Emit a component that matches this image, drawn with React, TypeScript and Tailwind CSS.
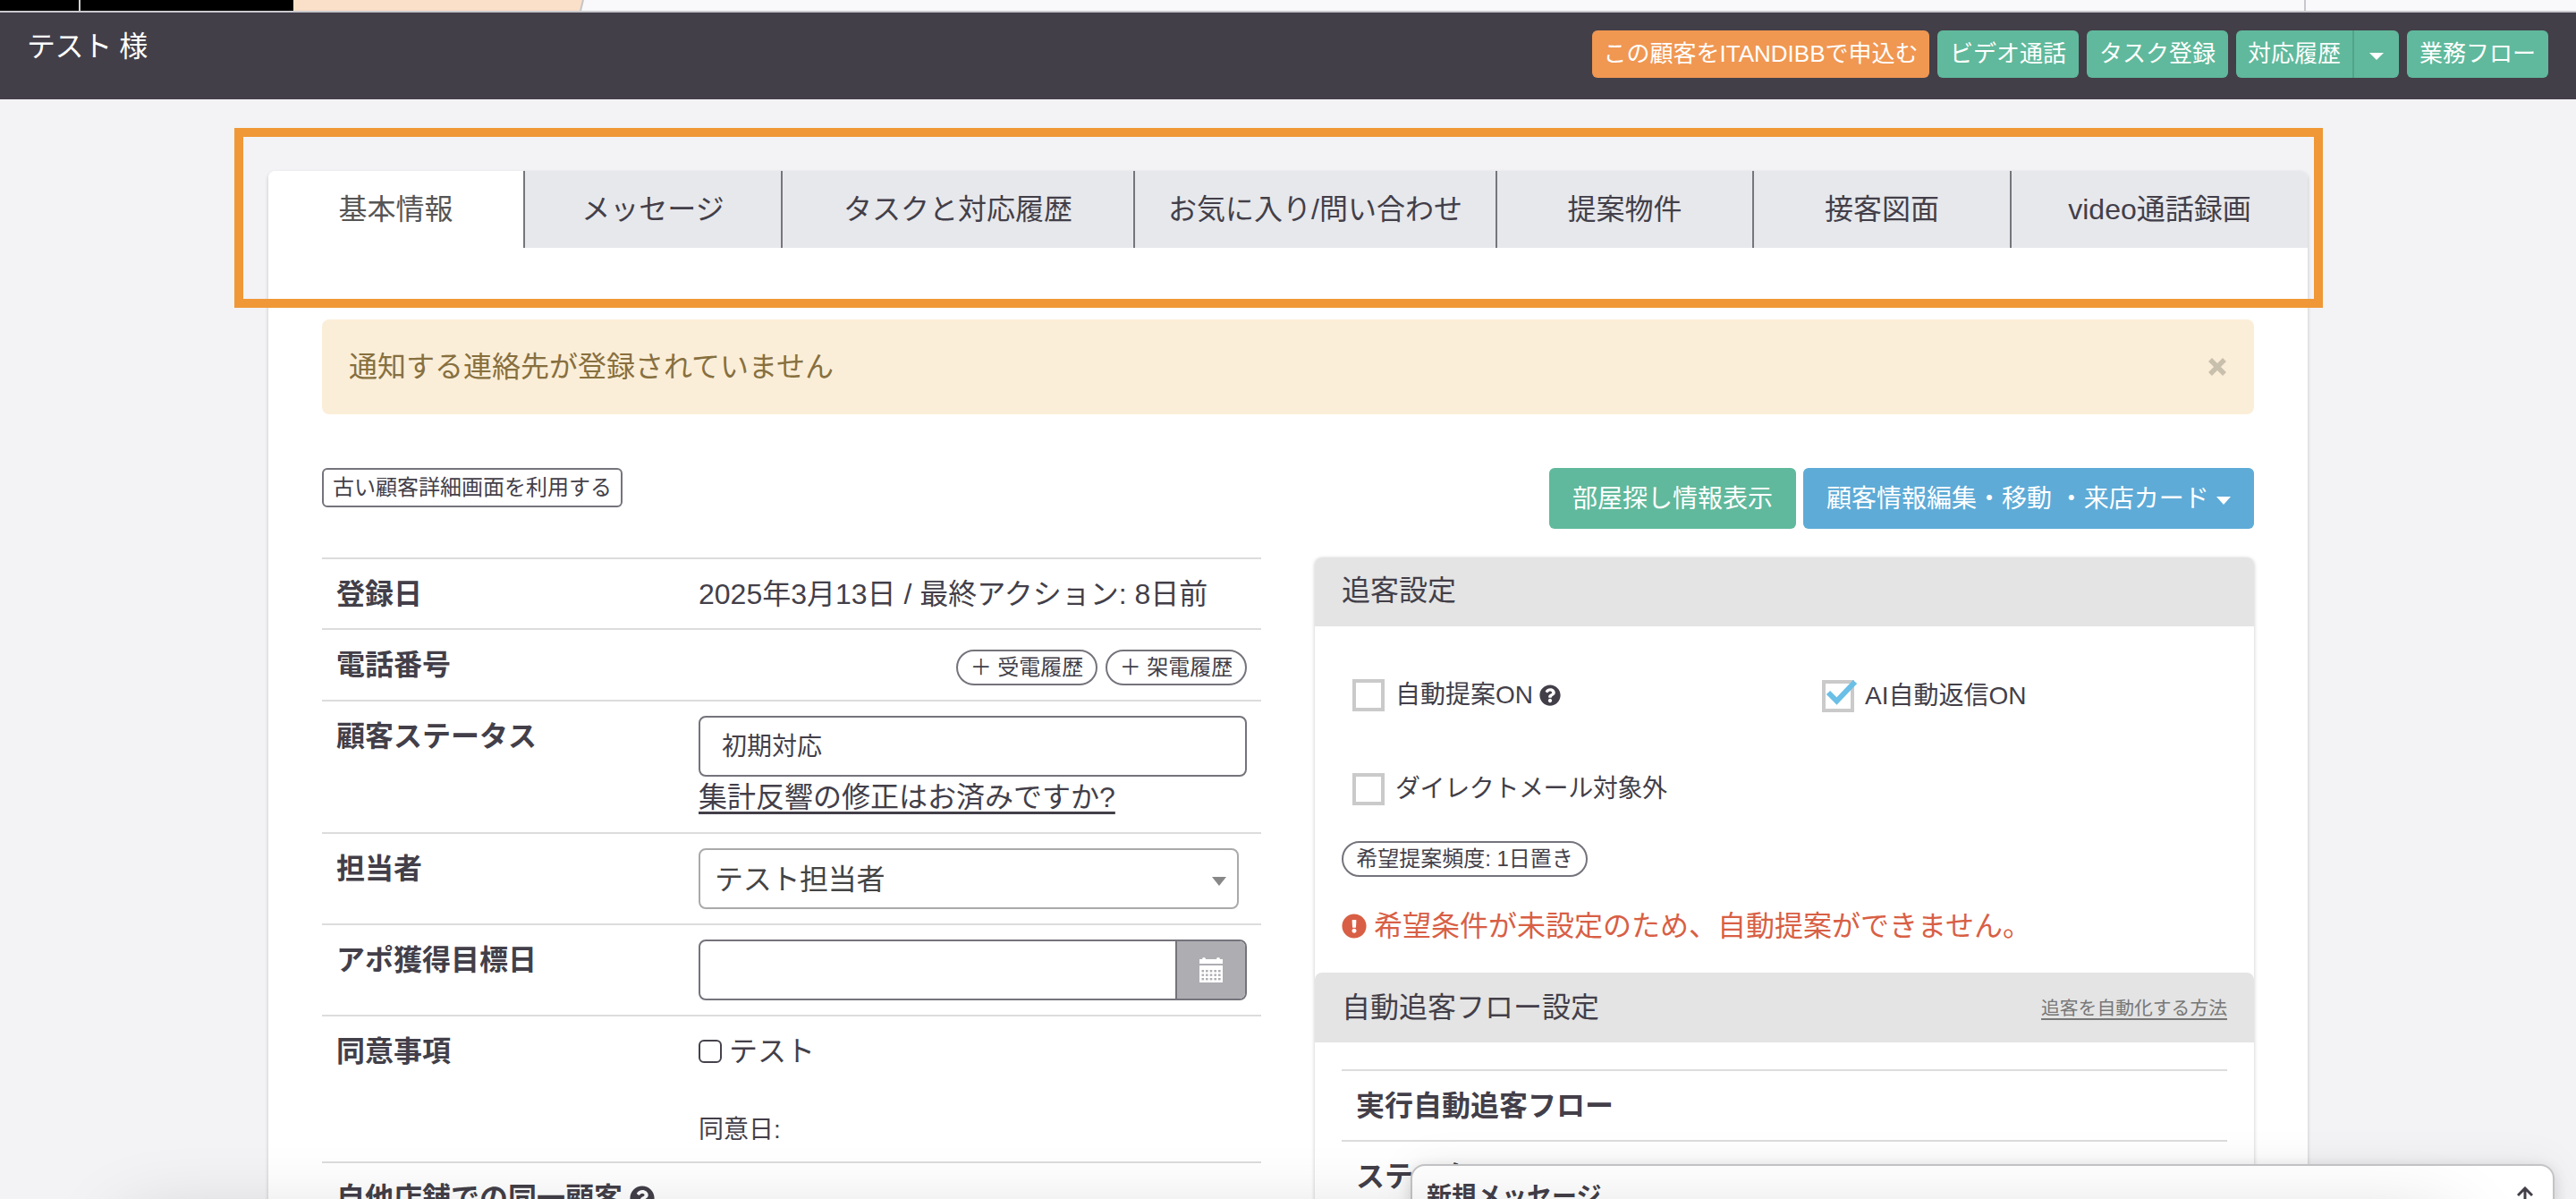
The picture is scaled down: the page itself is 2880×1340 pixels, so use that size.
import type { ReactNode } from 'react'
import { FaExclamationCircle, FaQuestionCircle } from 'react-icons/fa'

const tabs = [
  { label: '基本情報', width: 'w-[285px]' },
  { label: 'メッセージ', width: 'w-[288px]' },
  { label: 'タスクと対応履歴', width: 'w-[394px]' },
  { label: 'お気に入り/問い合わせ', width: 'w-[405px]' },
  { label: '提案物件', width: 'w-[287px]' },
  { label: '接客図面', width: 'w-[288px]' },
  { label: 'video通話録画', width: 'w-[333px]' },
]

function Caret({ className = 'w-4 h-2' }: { className?: string }) {
  return (
    <svg viewBox="0 0 16 8" preserveAspectRatio="none" className={`fill-current ${className}`}>
      <path d="M0 0h16L8 8z" />
    </svg>
  )
}

// Calendar glyph with a 5x3 grid of day dots
function CalendarIcon() {
  return (
    <svg viewBox="0 0 26 28" className="h-7 w-[26px]">
      <path d="M0 2h3q0-2 2-2t2 2h12q0-2 2-2t2 2h3v5H0zM0 9h26v19H0z" fill="#fff" />
      {[14, 18.5, 23].map((y) =>
        [2.5, 7, 11.7, 16.4, 21].map((x) => (
          <rect key={`${x}-${y}`} x={x} y={y} width="2.6" height="2.4" fill="#aeadb2" />
        )),
      )}
    </svg>
  )
}

// Small button used in the dark header
function HeaderButton({
  children,
  className = 'w-[158px] rounded-md bg-[#60b99c]',
}: {
  children: ReactNode
  className?: string
}) {
  return (
    <button
      className={`h-[53px] text-center text-[26px] leading-[53px] text-white whitespace-nowrap ${className}`}
    >
      {children}
    </button>
  )
}

// Outlined pill
function Pill({ children, className = '' }: { children: ReactNode; className?: string }) {
  return (
    <button
      className={`h-10 rounded-full border-2 border-[#75737b] text-2xl leading-9 whitespace-nowrap ${className}`}
    >
      {children}
    </button>
  )
}

// One row of the customer detail table
function Row({
  label,
  children,
  className = '',
}: {
  label: ReactNode
  children?: ReactNode
  className?: string
}) {
  return (
    <div className={`flex border-t-2 border-[#dcdcdc] px-4 pt-4 ${className}`}>
      <div className="w-[405px] shrink-0 font-bold leading-[46px]">{label}</div>
      <div className="flex-1">{children}</div>
    </div>
  )
}

function CheckItem({
  label,
  checked = false,
  children,
  className = '',
}: {
  label: string
  checked?: boolean
  children?: ReactNode
  className?: string
}) {
  return (
    <div className={`flex items-center text-[28px] leading-9 ${className}`}>
      <span className="relative mr-3 size-9 shrink-0 border-4 border-[#cacaca] bg-white">
        {checked && (
          <svg viewBox="0 0 36 36" className="absolute -top-1 -left-1 size-9 overflow-visible">
            <path d="M7 14l9.5 9.5L37 2" fill="none" stroke="#6bbfe6" strokeWidth="6" />
          </svg>
        )}
      </span>
      {label}
      {children}
    </div>
  )
}

function Header() {
  return (
    <header>
      <div className="flex h-3 bg-[#f9f9fc]">
        <svg viewBox="0 0 654 12" className="h-3 w-[654px]">
          <path d="M0 0h328v12H0z" fill="#000" />
          <path d="M88 0h2v12h-2z" fill="#d0d0d0" />
          <path d="M328 0h324l-4 12H328z" fill="#fadfc9" />
          <path d="M652 0l-3 12" stroke="#c5c5c5" strokeWidth="2" />
        </svg>
        <div className="ml-auto w-[304px] border-l-2 border-[#c8c8cc]" />
      </div>
      <div className="flex h-[99px] justify-between border-t-2 border-[#c9c8cc] bg-[#433f49] pt-5 pr-[31px] pl-[30px]">
        <div className="-mt-[3px] leading-[42px] tracking-[-0.4px] text-white">テスト 様</div>
        <div className="flex gap-[9px]">
          <HeaderButton className="w-[377px] rounded-md bg-[#f09752]">
            この顧客をITANDIBBで申込む
          </HeaderButton>
          <HeaderButton>ビデオ通話</HeaderButton>
          <HeaderButton>タスク登録</HeaderButton>
          <div className="flex">
            <HeaderButton className="w-[132px] rounded-l-md border-r-2 border-[#52a389] bg-[#60b99c]">
              対応履歴
            </HeaderButton>
            <button className="flex h-[53px] w-[50px] items-center justify-center rounded-r-md bg-[#60b99c] pt-1 text-white">
              <Caret />
            </button>
          </div>
          <HeaderButton>業務フロー</HeaderButton>
        </div>
      </div>
    </header>
  )
}

function CustomerTable() {
  return (
    <div className="w-[1050px]">
      <Row label="登録日" className="h-[79px] leading-[46px]">
        2025年3月13日 / 最終アクション: 8日前
      </Row>
      <Row label="電話番号" className="h-20">
        <div className="mt-1.5 flex justify-end gap-[9px]">
          <Pill className="w-[158px]">＋ 受電履歴</Pill>
          <Pill className="w-[158px]">＋ 架電履歴</Pill>
        </div>
      </Row>
      <Row label="顧客ステータス" className="h-[148px]">
        <div className="h-[68px] w-[613px] rounded-lg border-2 border-[#75737b] pl-6 text-[28px] leading-[65px]">
          初期対応
        </div>
        <div className="leading-[46px] underline decoration-[2.5px] underline-offset-[5px]">
          集計反響の修正はお済みですか?
        </div>
      </Row>
      <Row label="担当者" className="h-[102px]">
        <div className="flex h-[68px] w-[604px] items-center justify-between rounded-lg border-2 border-[#aaa] pt-0.5 pr-3 pl-4 text-[#444]">
          <span className="tracking-[-0.3px]">テスト担当者</span>
          <Caret className="mt-1 h-2.5 w-4 text-[#888]" />
        </div>
      </Row>
      <Row label="アポ獲得目標日" className="h-[102px]">
        <div className="flex h-[68px] w-[613px] rounded-lg border-2 border-[#75737b]">
          <div className="flex-1" />
          <div className="flex w-[78px] items-center justify-center rounded-r-md border-l-2 border-[#75737b] bg-[#aeadb2]">
            <CalendarIcon />
          </div>
        </div>
      </Row>
      <Row label="同意事項" className="h-[164px]">
        <div className="flex h-[46px] items-center">
          <span className="mr-2 size-[26px] rounded-md border-[2.5px] border-[#45424b]" />
          テスト
        </div>
        <div className="mt-[45px] text-[28px] leading-10">同意日:</div>
      </Row>
      <Row
        label={
          <span className="flex items-center gap-2">
            自他店舗での同一顧客
            <FaQuestionCircle className="size-7" />
          </span>
        }
      />
    </div>
  )
}

function FollowUpPanel() {
  return (
    <div className="h-[760px] w-[1050px] rounded-lg shadow-[0_1px_4px_rgba(0,0,0,0.22)]">
      <div className="h-[77px] rounded-t-lg bg-[#e4e4e4] px-[30px] leading-[75px]">追客設定</div>
      <div className="h-[387px] px-[30px] pt-[58px]">
        <div className="flex pl-3">
          <CheckItem label="自動提案ON" className="w-[525px]">
            <FaQuestionCircle className="ml-[7px] size-6" />
          </CheckItem>
          <CheckItem label="AI自動返信ON" checked className="mt-0.5" />
        </div>
        <CheckItem label="ダイレクトメール対象外" className="mt-[68px] pl-3 tracking-[-0.4px]" />
        <Pill className="mt-10 w-[275px]">希望提案頻度: 1日置き</Pill>
        <div className="mt-8 flex items-center gap-2 leading-[46px] text-[#d85f45]">
          <FaExclamationCircle className="size-7" />
          希望条件が未設定のため、自動提案ができません。
        </div>
      </div>
      <div className="flex h-[78px] items-center justify-between rounded-t-lg bg-[#e4e4e4] px-[30px]">
        <span>自動追客フロー設定</span>
        <a className="pt-0.5 text-[20.8px] text-[#777] underline underline-offset-4">
          追客を自動化する方法
        </a>
      </div>
      <div className="px-[30px] pt-[30px]">
        <Row label="実行自動追客フロー" className="h-[79px]" />
        <Row label="ステータス" />
      </div>
    </div>
  )
}

export default function App() {
  return (
    <div className="relative h-[1340px] w-[2880px] overflow-hidden bg-[#f3f3f6] font-['Liberation_Sans','Noto_Sans_CJK_JP',sans-serif] text-[32px] leading-[46px] text-[#433f49]">
      <Header />
      <main className="mx-auto mt-20 h-[1300px] w-[2280px] rounded-t-lg bg-white shadow-[0_2px_4px_rgba(0,0,0,0.2)]">
        <nav className="flex h-[86px] overflow-hidden rounded-t-lg">
          {tabs.map((tab, i) => (
            <button
              key={tab.label}
              className={`${tab.width} pb-px ${
                i === 0 ? 'bg-white text-[#555]' : 'border-l-2 border-[#75757c] bg-[#e7e8ec]'
              }`}
            >
              {tab.label}
            </button>
          ))}
        </nav>
        <div className="px-[60px] pt-20">
          <div className="flex h-[106px] items-center justify-between rounded-lg bg-[#fbeed8] pr-[31px] pl-[30px] text-[#87703f]">
            通知する連絡先が登録されていません
            <svg viewBox="0 0 20 20" className="size-5">
              <path d="M2 2l16 16M18 2L2 18" stroke="#c9bfad" strokeWidth="5.5" />
            </svg>
          </div>
          <div className="mt-[60px] flex items-start justify-between">
            <button className="h-11 w-[336px] rounded-md border-2 border-[#75737b] text-2xl leading-[38px]">
              古い顧客詳細画面を利用する
            </button>
            <div className="flex gap-2 text-[28px] text-white">
              <button className="h-[68px] w-[276px] rounded-md bg-[#60b99c] pt-px">
                部屋探し情報表示
              </button>
              <button className="flex h-[68px] w-[504px] items-center justify-between rounded-md bg-[#5eabd7] px-[26px] pt-px">
                顧客情報編集・移動 ・来店カード
                <Caret className="mt-1 h-[9px] w-4" />
              </button>
            </div>
          </div>
          <div className="mt-8 flex justify-between">
            <CustomerTable />
            <FollowUpPanel />
          </div>
        </div>
      </main>

      {/* highlight frame around the tabs */}
      <div className="absolute top-[143px] left-[262px] h-[201px] w-[2335px] border-[10px] border-[#f09837]" />

      {/* new message drawer */}
      <div className="absolute top-[1301px] left-[1577px] flex h-20 w-[1279px] justify-between rounded-t-2xl border-2 border-[#c4c4c6] bg-white pt-3 pr-[22px] pl-4 shadow-[0_4px_16px_rgba(0,0,0,0.14),0_0_50px_rgba(0,0,0,0.06)]">
        <span className="text-[28px] font-bold leading-[46px]">新規メッセージ</span>
        <svg viewBox="0 0 18 28" className="mt-[11px] h-7 w-[18px]">
          <path d="M9 28V2M1 10l8-8 8 8" fill="none" stroke="#433f49" strokeWidth="3" />
        </svg>
      </div>

      {/* soft shade along the bottom edge */}
      <div className="pointer-events-none absolute top-[1370px] left-[140px] h-20 w-[2600px] shadow-[0_0_90px_rgba(0,0,0,0.2)]" />
    </div>
  )
}
